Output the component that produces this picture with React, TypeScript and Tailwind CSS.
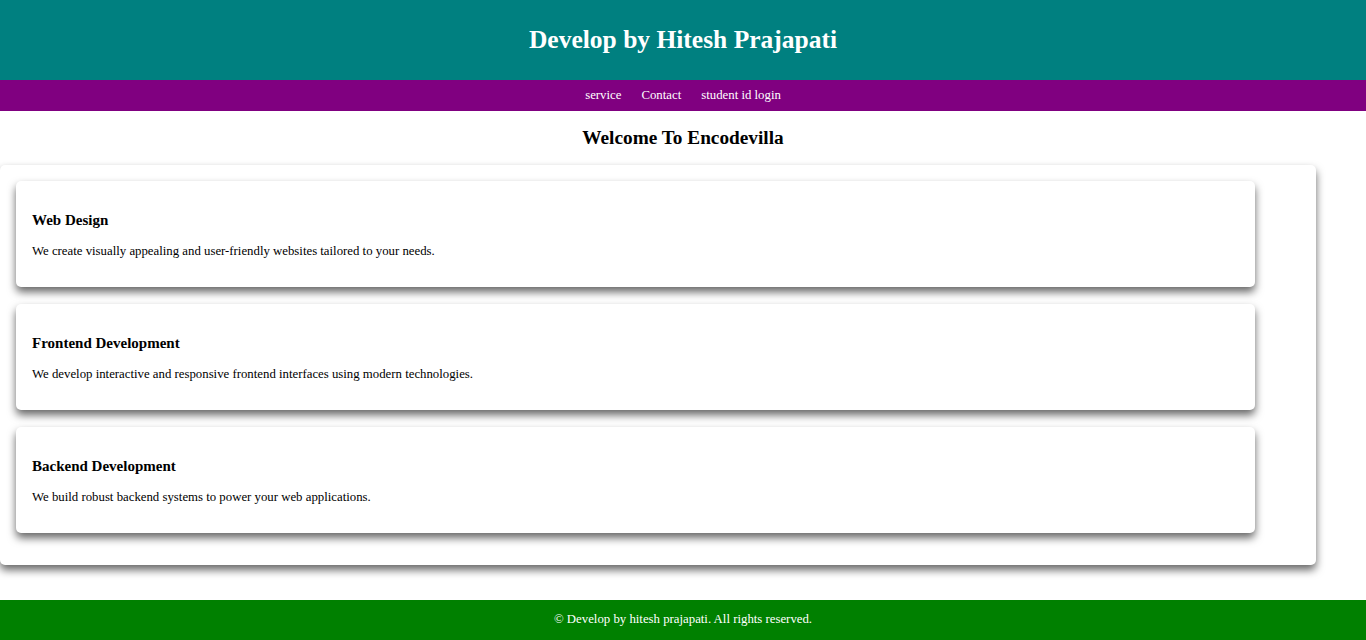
const services = [
  {
    title: 'Web Design',
    text: 'We create visually appealing and user-friendly websites tailored to your needs.',
  },
  {
    title: 'Frontend Development',
    text: 'We develop interactive and responsive frontend interfaces using modern technologies.',
  },
  {
    title: 'Backend Development',
    text: 'We build robust backend systems to power your web applications.',
  },
];

function App() {
  return (
    <div className="min-h-[640px] bg-white text-black font-['Liberation_Serif','Times_New_Roman',serif]">
      <header className="h-[80px] bg-[#008080] flex items-center justify-center">
        <h1 className="text-[25.5px] font-bold text-white">Develop by Hitesh Prajapati</h1>
      </header>
      <nav className="h-[31px] bg-[#800080] flex items-center justify-center gap-[20px] text-[12.8px] text-white">
        <a href="#">service</a>
        <a href="#">Contact</a>
        <a href="#">student id login</a>
      </nav>

      <div className="h-[54px] flex items-center justify-center">
        <h3 className="text-[19.3px] font-bold">Welcome To Encodevilla</h3>
      </div>

      <section className="w-[1316px] bg-white rounded-[5px] shadow-[0_5px_8px_rgba(0,0,0,0.6)] pt-[16px] pb-[32px] pl-[16px] flex flex-col gap-[17px]">
        {services.map(s => (
          <div key={s.title} className="w-[1239px] h-[106px] bg-white rounded-[5px] shadow-[0_5px_8px_rgba(0,0,0,0.6)] px-[16px] pt-[30px]">
            <h3 className="text-[15px] font-bold leading-[18px]">{s.title}</h3>
            <p className="text-[12.8px] leading-[16px] mt-[14px]">{s.text}</p>
          </div>
        ))}
      </section>

      <footer className="mt-[35px] h-[40px] bg-[#008000] flex items-center justify-center text-[12.8px] text-white">
        © Develop by hitesh prajapati. All rights reserved.
      </footer>
    </div>
  );
}

export default App;
